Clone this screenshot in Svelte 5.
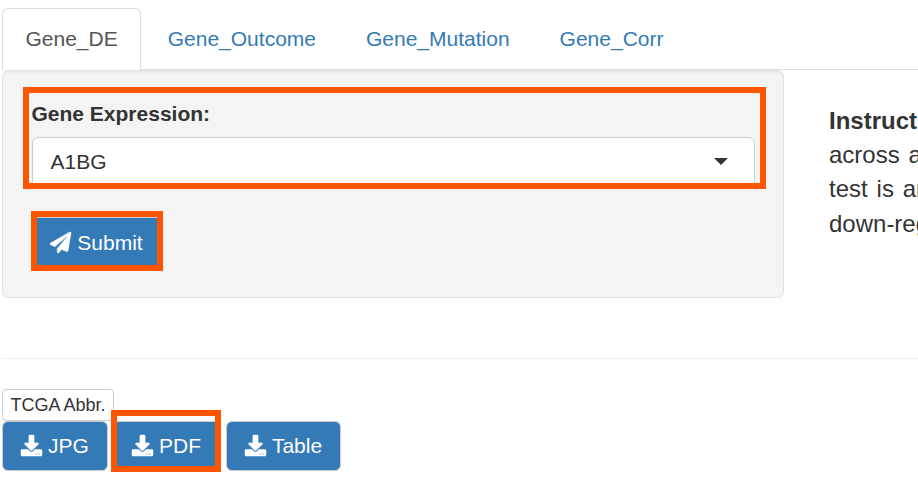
<script>
  const tabs = ['Gene_DE', 'Gene_Outcome', 'Gene_Mutation', 'Gene_Corr'];
  const downloads = [
    { label: 'JPG', width: 106 },
    { label: 'PDF', width: 107, marked: true },
    { label: 'Table', width: 115 }
  ];
  let active = $state('Gene_DE');
</script>

<div class="page">
  <nav class="tabs">
    {#each tabs as tab}
      <button class="tab" class:active={tab === active} onclick={() => (active = tab)}>{tab}</button>
    {/each}
  </nav>

  <div class="row">
    <section class="well">
      <div class="field">
        <span class="label">Gene Expression:</span>
        <div class="select"><span>A1BG</span><i class="caret"></i></div>
        <div class="mark mark-field"></div>
      </div>
      <button class="btn submit">
        <svg viewBox="0 0 512 512"><path d="M476 3.2L12.5 270.6c-18.1 10.4-15.8 35.6 2.2 43.2L121 358.4l287.3-253.2c5.5-4.9 13.3 2.6 8.6 8.3L176 407v80.5c0 23.6 28.5 32.9 42.5 15.8L282 426l124.6 52.2c14.2 6 30.4-2.9 33-18.2l72-432C515 7.8 493.3-6.8 476 3.2z" /></svg>
        <span>Submit</span>
        <i class="mark mark-submit"></i>
      </button>
    </section>
    <div class="intro">
      <div><b>Instruct</b></div>
      <div>across a</div>
      <div>test is an</div>
      <div>down-reg</div>
    </div>
  </div>

  <hr />

  <button class="abbr">TCGA Abbr.</button>
  <div class="downloads">
    {#each downloads as d}
      <button class="btn" class:after-mark={d.label === 'Table'} style:width="{d.width}px">
        <svg viewBox="0 0 512 512"><path d="M216 0h80c13.3 0 24 10.7 24 24v168h87.7c17.8 0 26.7 21.5 14.1 34.1L269.7 378.3c-7.5 7.5-19.8 7.5-27.3 0L90.1 226.1c-12.6-12.6-3.7-34.1 14.1-34.1H192V24c0-13.3 10.7-24 24-24zm296 376v112c0 13.3-10.7 24-24 24H24c-13.3 0-24-10.7-24-24V376c0-13.3 10.7-24 24-24h146.7l49 49c20.1 20.1 52.5 20.1 72.6 0l49-49H488c13.3 0 24 10.7 24 24zm-124 88c0-11-9-20-20-20s-20 9-20 20 9 20 20 20 20-9 20-20zm64 0c0-11-9-20-20-20s-20 9-20 20 9 20 20 20 20-9 20-20z" /></svg>
        <span>{d.label}</span>
        {#if d.marked}<i class="mark mark-pdf"></i>{/if}
      </button>
    {/each}
  </div>
</div>

<style>
  :global(body) { background: #fff; overflow: hidden; }
  .page {
    box-sizing: border-box;
    width: 918px;
    height: 483px;
    padding: 8px 0 0 2px;
    overflow: hidden;
    font: 21px/30px "Liberation Sans", Arial, sans-serif;
    color: #333;
  }
  button { font: inherit; box-sizing: border-box; margin: 0; cursor: pointer; }
  .tabs { display: flex; gap: 3px; height: 61px; border-bottom: 1px solid #ddd; }
  .tab {
    height: 61px;
    padding: 0 22.5px;
    border: 1px solid transparent;
    border-bottom: 0;
    border-radius: 6px 6px 0 0;
    background: none;
    color: #337ab7;
  }
  .tab.active { height: 62px; padding-bottom: 1px; border-color: #ddd; background: #fff; color: #555; }
  .row { display: flex; align-items: flex-start; }
  .well {
    box-sizing: border-box;
    flex: none;
    width: 782px;
    height: 228px;
    padding: 28px 28px 0 28.5px;
    border: 1px solid #e3e3e3;
    border-radius: 6px;
    background: #f4f4f4;
    box-shadow: inset 0 1.5px 1.5px rgba(0, 0, 0, 0.05);
  }
  .field { position: relative; }
  .label { display: block; height: 38px; font-weight: 700; }
  .select {
    box-sizing: border-box;
    display: flex;
    align-items: center;
    justify-content: space-between;
    height: 50px;
    width: 723.5px;
    padding: 0 26px 0 18px;
    border: 1px solid #ccc;
    border-radius: 6px;
    background: #fff;
  }
  .caret { margin-bottom: 2px; border: 7px solid transparent; border-top-color: #333; border-bottom: 0; }
  .mark { position: absolute; box-sizing: border-box; border: 6px solid #ff5500; pointer-events: none; }
  .mark-field { left: -8.5px; top: -12px; width: 743px; height: 102px; }
  .btn {
    position: relative;
    display: flex;
    align-items: center;
    justify-content: center;
    gap: 6px;
    height: 50px;
    padding: 0;
    border: 1px solid #ccc;
    border-radius: 6px;
    background: #337ab7;
    color: #fff;
  }
  .btn svg { width: 21px; height: 21px; overflow: visible; fill: currentColor; stroke: currentColor; stroke-width: 12; }
  .submit { width: 130px; margin-top: 30px; }
  .submit span { padding-top: 1px; }
  .mark-submit { left: -2px; top: -7px; width: 132px; height: 60px; }
  .mark-pdf { left: -3px; top: -12px; width: 110px; height: 62px; }
  .after-mark { margin-left: 1px; }
  .intro {
    flex: none;
    padding: 34px 0 0 45px;
    font-size: 24px;
    line-height: 34.2px;
    word-spacing: 2.2px;
    white-space: nowrap;
  }
  hr { margin: 60px 0 30px; border: 0; border-top: 1px solid #eee; }
  .abbr {
    display: block;
    width: 112px;
    height: 32px;
    padding: 0;
    border: 1px solid #ccc;
    border-radius: 4px;
    background: #fff;
    color: #333;
    font-size: 18px;
  }
  .downloads { display: flex; gap: 5px; }
  .downloads svg { margin-bottom: 2px; }
</style>
